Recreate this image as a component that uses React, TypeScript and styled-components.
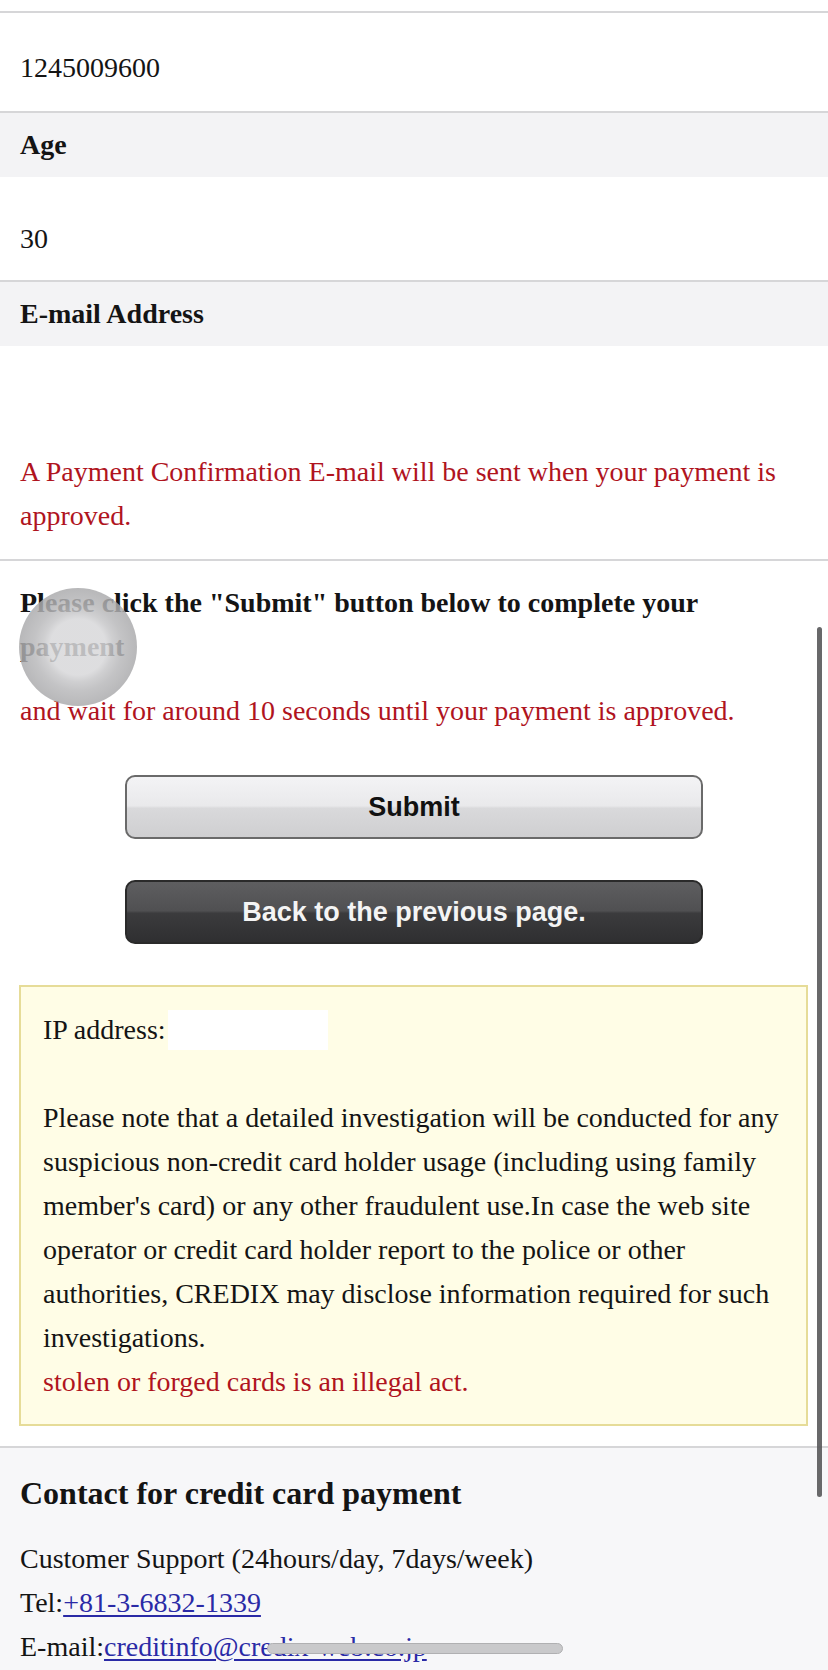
import React from "react";
import styled, { createGlobalStyle } from "styled-components";

const Global = createGlobalStyle`
  html, body { margin: 0; padding: 0; background: #ffffff; }
  body {
    font-family: "Liberation Serif", "Times New Roman", serif;
    font-size: 28px;
    line-height: 44px;
    color: #141414;
  }
  * { box-sizing: border-box; }
`;

const Page = styled.div`
  position: relative;
  width: 828px;
  height: 1670px;
  overflow: hidden;
  padding-top: 11px;
`;

const Divider = styled.hr<{ $gap?: number }>`
  margin: ${(p) => p.$gap ?? 0}px 0 0;
  border: 0;
  height: 2px;
  background: #d6d6d8;
`;

const ValueRow = styled.div<{ $top?: number; $bottom?: number }>`
  padding: ${(p) => p.$top ?? 40}px 20px ${(p) => p.$bottom ?? 19}px;
  background: #ffffff;
`;

const LabelRow = styled.div`
  padding: 10px 20px 10px;
  background: #f3f3f5;
  font-weight: bold;
  line-height: 44px;
`;

const Notice = styled.div`
  padding: 104px 20px 21px;
`;

const Red = styled.p`
  margin: 0;
  color: #b0141e;
`;

const Section = styled.div`
  padding: 20px 20px 0;
`;

const Bold = styled.p`
  margin: 0 0 20px;
  font-weight: bold;
`;

const Buttons = styled.div`
  display: flex;
  flex-direction: column;
  align-items: center;
  gap: 41px;
  margin-top: 42px;
`;

const Button = styled.button<{ $dark?: boolean }>`
  width: 578px;
  height: 64px;
  border-radius: 10px;
  border: 2px solid ${(p) => (p.$dark ? "#2a2a2a" : "#6a6a6a")};
  font-family: "Liberation Sans", Arial, sans-serif;
  font-weight: bold;
  font-size: 27px;
  color: ${(p) => (p.$dark ? "#f4f4f4" : "#111111")};
  background: ${(p) =>
    p.$dark
      ? "linear-gradient(180deg, #5e5e60 0%, #505052 48%, #3b3b3d 52%, #2f2f31 100%)"
      : "linear-gradient(180deg, #f3f3f5 0%, #e9e9eb 48%, #d9d9db 52%, #cfcfd1 100%)"};
  padding: 0;
  cursor: pointer;
`;

const WarnBox = styled.div`
  margin: 41px 20px 0 19px;
  border: 2px solid #e6dc98;
  background: #fffde6;
  padding: 21px 22px 20px;
`;

const IpLine = styled.div`
  display: flex;
  align-items: center;
  height: 44px;
`;

const IpValue = styled.span`
  display: inline-block;
  width: 160px;
  height: 40px;
  background: #ffffff;
  margin-left: 2px;
`;

const Spacer = styled.div`
  height: 44px;
`;

const Para = styled.p`
  margin: 0;
`;

const Contact = styled.div`
  background: #f7f7f9;
  padding: 23px 20px 0;
  height: 300px;
`;

const Heading = styled.h2`
  margin: 0 0 22px;
  font-size: 32px;
  line-height: 44px;
  font-weight: bold;
`;

const Line = styled.div``;

const Link = styled.a`
  color: #2a2aa6;
  text-decoration: underline;
  text-underline-offset: 3px;
`;

const TouchDot = styled.div`
  position: absolute;
  left: 19px;
  top: 588px;
  width: 118px;
  height: 118px;
  border-radius: 50%;
  background: radial-gradient(
    circle,
    rgba(216, 216, 218, 0.86) 0,
    rgba(216, 216, 218, 0.86) 28px,
    rgba(198, 198, 200, 0.84) 35px,
    rgba(184, 184, 186, 0.84) 44px,
    rgba(170, 170, 172, 0.84) 59px
  );
  pointer-events: none;
`;

const VScroll = styled.div`
  position: absolute;
  left: 817px;
  top: 627px;
  width: 5px;
  height: 870px;
  border-radius: 3px;
  background: rgba(88, 88, 90, 0.9);
`;

const HScroll = styled.div`
  position: absolute;
  left: 267px;
  top: 1643px;
  width: 296px;
  height: 11px;
  border-radius: 6px;
  background: #c9c9cb;
  border: 1px solid #b0b0b2;
`;

export default function App() {
  return (
    <>
      <Global />
      <Page>
        <Divider />
        <ValueRow $top={33} $bottom={21}>1245009600</ValueRow>
        <Divider />
        <LabelRow>Age</LabelRow>
        <ValueRow>30</ValueRow>
        <Divider />
        <LabelRow>E-mail Address</LabelRow>
        <Notice>
          <Red>A Payment Confirmation E-mail will be sent when your payment is approved.</Red>
        </Notice>
        <Divider />
        <Section>
          <Bold>Please click the "Submit" button below to complete your payment</Bold>
          <Red>and wait for around 10 seconds until your payment is approved.</Red>
          <Buttons>
            <Button type="button">Submit</Button>
            <Button type="button" $dark>
              Back to the previous page.
            </Button>
          </Buttons>
        </Section>
        <WarnBox>
          <IpLine>
            IP address:<IpValue />
          </IpLine>
          <Spacer />
          <Para>
            Please note that a detailed investigation will be conducted for any suspicious
            non-credit card holder usage (including using family member's card) or any other
            fraudulent use.In case the web site operator or credit card holder report to the
            police or other authorities, CREDIX may disclose information required for such
            investigations.
          </Para>
          <Red>stolen or forged cards is an illegal act.</Red>
        </WarnBox>
        <Divider $gap={20} />
        <Contact>
          <Heading>Contact for credit card payment</Heading>
          <Line>Customer Support (24hours/day, 7days/week)</Line>
          <Line>
            Tel:<Link href="#">+81-3-6832-1339</Link>
          </Line>
          <Line>
            E-mail:<Link href="#">creditinfo@credix-web.co.jp</Link>
          </Line>
        </Contact>
        <TouchDot />
        <VScroll />
        <HScroll />
      </Page>
    </>
  );
}
